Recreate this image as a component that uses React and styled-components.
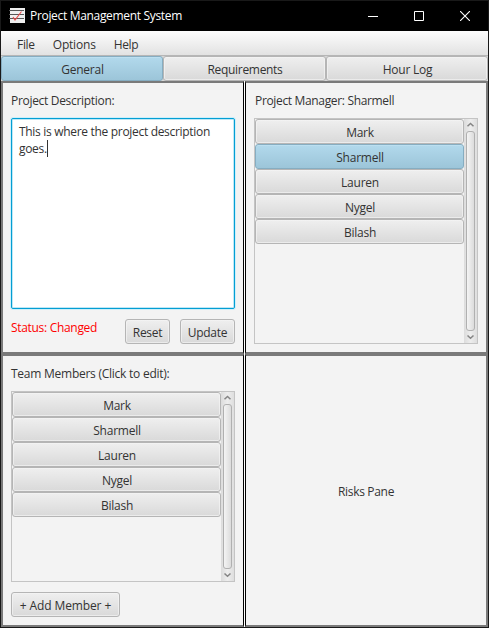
import React from "react";
import styled, { createGlobalStyle, css } from "styled-components";

const GlobalStyle = createGlobalStyle`
  * { box-sizing: border-box; }
  body { margin: 0; background: #f3f3f3; }
  button { font: inherit; color: inherit; }
`;

const Window = styled.div`
  width: 489px;
  height: 628px;
  display: flex;
  flex-direction: column;
  overflow: hidden;
  border: 1px solid #191919;
  background: #f3f3f3;
  color: #333;
  font: 12px/16px "Open Sans", "Noto Sans", sans-serif;
  white-space: nowrap;
`;

const TitleBar = styled.header`
  height: 30px;
  flex: none;
  display: flex;
  align-items: center;
  padding-left: 8px;
  background: #000;
  color: #fff;
`;

const Title = styled.h1`
  flex: 1;
  margin: 0 0 0 5px;
  font-size: 12px;
  font-weight: 400;
  letter-spacing: ${(p) => p.$spacing}px;
`;

const WindowButton = styled.button`
  width: 46px;
  height: 30px;
  padding: 0;
  border: 0;
  background: none;
  display: grid;
  place-items: center;
  svg { display: block; }
`;

const Text = styled.span`
  display: inline-block;
  vertical-align: top;
  transform: translateY(1px);
  letter-spacing: ${(p) => p.$spacing ?? -0.31}px;
  color: ${(p) => p.$color ?? "inherit"};
`;

const MenuBar = styled.nav`
  height: 25px;
  flex: none;
  display: flex;
  align-items: center;
  gap: 18px;
  padding: 1px 0 0 16px;
  background: linear-gradient(#fdfdfd, #e2e2e2);
  border-bottom: 1px solid #b6b6b6;
`;

const selected = css`
  background: linear-gradient(#b2d9ec, #9cc5d9);
  border-color: #86adc1;
  box-shadow: inset 0 1px #bcdff0;
`;

const face = css`
  border: 1px solid #b5b5b5;
  border-radius: 3px;
  background: linear-gradient(#efefef, #d9d9d9);
  box-shadow: inset 0 0 0 1px #f5f5f5aa;
  display: flex;
  align-items: center;
  justify-content: center;
  ${(p) => p.$selected && selected}
`;

const Tabs = styled.div`
  height: 25px;
  flex: none;
  display: grid;
  grid-template-columns: 162px 163px 162px;
  background: #d6d6d6;
`;

const Tab = styled.button`
  ${face}
  padding: 0 0 0 1px;
`;

const Panes = styled.main`
  flex: 1;
  min-height: 0;
  display: grid;
  grid-template-columns: 243px 1fr;
  grid-template-rows: 273px 1fr;
  column-gap: 1px;
  background: #fff;
`;

const Pane = styled.section`
  display: flex;
  flex-direction: column;
  align-items: ${(p) => (p.$centered ? "center" : "stretch")};
  justify-content: ${(p) => (p.$centered ? "center" : "flex-start")};
  padding: 9px 8px 8px;
  background: #f3f3f3;
  border-style: solid;
  border-width: 2px;
  border-color: #7a7a7a;
  ${(p) => (p.$side === "left" ? "border-right: 1px solid #000;" : "border-left: 1px solid #000;")}
`;

const Heading = styled.div`
  height: 16px;
  flex: none;
  margin: 0 0 10px ${(p) => p.$indent ?? 0}px;
`;

const Description = styled.div`
  width: 224px;
  height: 191px;
  flex: none;
  padding: 3px 7px;
  border: 1px solid #039ed3;
  border-radius: 2px;
  background: #fff;
  box-shadow: 0 0 0 1px #cdeffa, inset 0 0 0 1px #bfe7f5;
  line-height: 17px;
`;

const Caret = styled.i`
  display: inline-block;
  width: 1px;
  height: 17px;
  vertical-align: top;
  background: #333;
`;

const Actions = styled.div`
  display: flex;
  gap: 10px;
  margin-top: 10px;
`;

const Status = styled.div`
  flex: 1;
`;

const Button = styled.button`
  ${face}
  width: ${(p) => p.$width}px;
  height: 25px;
  flex: none;
  padding: 0;
`;

const ListBox = styled.div`
  width: 224px;
  height: ${(p) => p.$height}px;
  flex: none;
  display: flex;
  border: 1px solid #c4c4c4;
`;

const Rows = styled.div`
  width: 209px;
  display: flex;
  flex-direction: column;
`;

const ListRow = styled.button`
  ${face}
  height: 25px;
  padding: 0 0 0 1px;
`;

const ScrollBar = styled.div`
  flex: 1;
  display: flex;
  flex-direction: column;
  align-items: center;
  background: linear-gradient(to right, #dcdcdc, #ededed 50%, #dedede);
  svg { display: block; flex: none; }
`;

const Thumb = styled.div`
  flex: 1;
  width: 9px;
  border: 1px solid #b0b0b0;
  border-radius: 3px;
  background: linear-gradient(to right, #f4f4f4, #dcdcdc);
`;

const AppIcon = () => (
  <svg width="16" height="16" viewBox="0 0 16 16">
    <path fill="#eee" d="M1 0h15v15H1z" />
    <path stroke="#555" d="M0 2.5h15M0 6.5h15M0 10.5h15" />
    <path fill="none" stroke="#e84a4a" strokeWidth="1.1" d="m4 9 2 3 6.5-8.5" />
  </svg>
);

const Arrow = ({ down }) => (
  <svg width="13" height="12" viewBox="0 0 13 12">
    <path fill="none" stroke="#858585" strokeWidth="1.5" d={down ? "m3.5 4.5 3 2.8 3-2.8" : "m3.5 7.3 3-2.8 3 2.8"} />
  </svg>
);

const names = ["Mark", "Sharmell", "Lauren", "Nygel", "Bilash"];

const MemberList = ({ current, height }) => (
  <ListBox $height={height}>
    <Rows>
      {names.map((name) => (
        <ListRow key={name} $selected={name === current}>
          <Text $spacing={-0.25}>{name}</Text>
        </ListRow>
      ))}
    </Rows>
    <ScrollBar>
      <Arrow />
      <Thumb />
      <Arrow down />
    </ScrollBar>
  </ListBox>
);

export default function App() {
  return (
    <Window>
      <GlobalStyle />
      <TitleBar>
        <AppIcon />
        <Title $spacing={-0.32}>Project Management System</Title>
        <WindowButton aria-label="Minimize">
          <svg width="10" height="10"><path stroke="#fff" d="M0 5.5h10" /></svg>
        </WindowButton>
        <WindowButton aria-label="Maximize">
          <svg width="10" height="10"><path fill="none" stroke="#fff" d="M.5.5h9v9h-9z" /></svg>
        </WindowButton>
        <WindowButton aria-label="Close">
          <svg width="10" height="10"><path stroke="#fff" strokeWidth="1.1" d="m0 0 10 10M10 0 0 10" /></svg>
        </WindowButton>
      </TitleBar>
      <MenuBar>
        <Text>File</Text>
        <Text $spacing={-0.2}>Options</Text>
        <Text>Help</Text>
      </MenuBar>
      <Tabs>
        <Tab $selected><Text $spacing={-0.25}>General</Text></Tab>
        <Tab><Text>Requirements</Text></Tab>
        <Tab><Text $spacing={-0.25}>Hour Log</Text></Tab>
      </Tabs>
      <Panes>
        <Pane $side="left">
          <Heading><Text>Project Description:</Text></Heading>
          <Description>
            <Text>This is where the project description<br />goes.<Caret /></Text>
          </Description>
          <Actions>
            <Status><Text $color="#f00">Status: Changed</Text></Status>
            <Button $width={45}><Text>Reset</Text></Button>
            <Button $width={55}><Text>Update</Text></Button>
          </Actions>
        </Pane>
        <Pane $side="right">
          <Heading $indent={1}><Text $spacing={-0.34}>Project Manager: Sharmell</Text></Heading>
          <MemberList current="Sharmell" height={226} />
        </Pane>
        <Pane $side="left">
          <Heading><Text $spacing={-0.25}>Team Members (Click to edit):</Text></Heading>
          <MemberList height={191} />
          <Actions>
            <Button $width={109}><Text $spacing={-0.12}>+ Add Member +</Text></Button>
          </Actions>
        </Pane>
        <Pane $side="right" $centered>
          <Text>Risks Pane</Text>
        </Pane>
      </Panes>
    </Window>
  );
}
